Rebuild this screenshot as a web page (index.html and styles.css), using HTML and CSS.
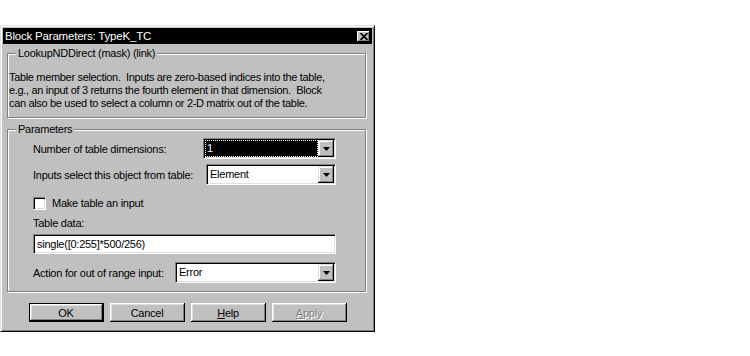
FILE: index.html
```html
<!DOCTYPE html>
<html lang="en">

<head>
    <meta charset="UTF-8">
    <title>Block Parameters: TypeK_TC</title>
    <link rel="stylesheet" href="styles.css">
</head>

<body>
    <div class="dialog">
        <!--标题栏-->
        <div class="titlebar">
            <span class="title">Block Parameters: TypeK_TC</span>
            <span class="close">
                <svg width="8" height="7" viewBox="0 0 8 7"><path d="M0.5 0 L7.5 7 M7.5 0 L0.5 7" stroke="#000" stroke-width="1.7"/></svg>
            </span>
        </div>

        <fieldset class="group group-mask">
            <legend>LookupNDDirect (mask) (link)</legend>
            <p class="desc">Table member selection.&nbsp; Inputs are zero-based indices into the table,<br>e.g., an input of 3 returns the fourth element in that dimension.&nbsp; Block<br>can also be used to select a column or 2-D matrix out of the table.</p>
        </fieldset>

        <fieldset class="group group-params">
            <legend>Parameters</legend>
            <div class="params">
                <div class="row row-dims">
                    <label>Number of table dimensions:</label>
                    <div class="combo combo-dims">
                        <span class="combo-text selected">1</span>
                        <span class="combo-btn"><svg width="7" height="4" viewBox="0 0 7 4"><polygon points="0,0 7,0 3.5,4" fill="#000"/></svg></span>
                    </div>
                </div>
                <div class="row row-select">
                    <label>Inputs select this object from table:</label>
                    <div class="combo combo-select">
                        <span class="combo-text">Element</span>
                        <span class="combo-btn"><svg width="7" height="4" viewBox="0 0 7 4"><polygon points="0,0 7,0 3.5,4" fill="#000"/></svg></span>
                    </div>
                </div>
                <div class="check-row">
                    <span class="checkbox"></span>
                    <span>Make table an input</span>
                </div>
                <div class="field-label">Table data:</div>
                <div class="edit">single([0:255]*500/256)</div>
                <div class="row row-action">
                    <label>Action for out of range input:</label>
                    <div class="combo combo-action">
                        <span class="combo-text">Error</span>
                        <span class="combo-btn"><svg width="7" height="4" viewBox="0 0 7 4"><polygon points="0,0 7,0 3.5,4" fill="#000"/></svg></span>
                    </div>
                </div>
            </div>
        </fieldset>

        <div class="buttons">
            <button class="btn default">OK</button>
            <button class="btn">Cancel</button>
            <button class="btn"><u>H</u>elp</button>
            <button class="btn disabled"><u>A</u>pply</button>
        </div>
    </div>
</body>

</html>
```

FILE: styles.css
```css
* {
    margin: 0;
    padding: 0;
    box-sizing: border-box;
}

body {
    background: #fff;
    font-family: "Liberation Sans", Arial, sans-serif;
    font-size: 11px;
    letter-spacing: -0.25px;
    color: #000;
}

.dialog {
    width: 375px;
    height: 307px;
    margin-top: 25px;
    padding: 2px;
    display: flex;
    flex-direction: column;
    background: #c0c0c0;
    border: 1px solid;
    border-color: #dfdfdf #000 #000 #dfdfdf;
    box-shadow: inset 1px 1px #fff, inset -1px -1px #808080;
}

/* 标题栏 */
.titlebar {
    height: 16px;
    display: flex;
    align-items: center;
    padding: 0 2px;
    background: #000;
    color: #fff;
}

.title {
    flex: 1;
    font-size: 11.5px;
    letter-spacing: -0.2px;
    line-height: 16px;
}

.close {
    width: 13px;
    height: 11px;
    display: flex;
    align-items: center;
    justify-content: center;
    background: #c0c0c0;
    box-shadow: inset -1px -1px #000, inset 1px 1px #fff, inset -2px -2px #808080;
}

/* 分组框 */
.group {
    margin: 3px 6px 0 4px;
    min-width: 0;
    border: 1px solid #808080;
    box-shadow: inset 1px 1px #fff, 1px 1px 0 #fff;
}

.group legend {
    margin-left: 8px;
    padding: 0 2px;
    line-height: 13px;
    background: #c0c0c0;
}

.group-params {
    margin-top: 5px;
}

.desc {
    padding: 11px 0 7px 1px;
    line-height: 13px;
    letter-spacing: -0.33px;
}

.params {
    padding: 1px 29px 8px 25px;
}

.row {
    display: flex;
    align-items: center;
    justify-content: space-between;
}

.row-dims {
    margin-top: 1px;
}

.row-select {
    margin-top: 5px;
}

.row-action {
    margin-top: 8px;
}

/* 下拉框 */
.combo {
    height: 21px;
    display: flex;
    background: #fff;
    border: 1px solid;
    border-color: #808080 #fff #fff #808080;
    box-shadow: inset 1px 1px #000, inset -1px -1px #dfdfdf;
    padding: 1px;
}

.combo-dims {
    width: 133px;
}

.combo-select {
    width: 130px;
}

.combo-action {
    width: 161px;
}

.combo-text {
    flex: 1;
    padding-left: 2px;
    line-height: 17px;
}

.combo-text.selected {
    background: #000;
    color: #fff;
    outline: 1px dotted #fff;
    outline-offset: -1px;
}

.combo-btn {
    width: 16px;
    display: flex;
    align-items: center;
    justify-content: center;
    background: #c0c0c0;
    box-shadow: inset -1px -1px #000, inset 1px 1px #dfdfdf, inset -2px -2px #808080, inset 2px 2px #fff;
}

/* 复选框 */
.check-row {
    display: flex;
    align-items: center;
    gap: 6px;
    margin-top: 12px;
    line-height: 13px;
}

.checkbox {
    width: 13px;
    height: 13px;
    background: #fff;
    border: 1px solid;
    border-color: #808080 #fff #fff #808080;
    box-shadow: inset 1px 1px #000, inset -1px -1px #dfdfdf;
}

.field-label {
    margin-top: 7px;
    line-height: 13px;
}

.edit {
    height: 20px;
    margin-top: 4px;
    padding-left: 3px;
    line-height: 18px;
    background: #fff;
    border: 1px solid;
    border-color: #808080 #fff #fff #808080;
    box-shadow: inset 1px 1px #000, inset -1px -1px #dfdfdf;
}

/* 按钮 */
.buttons {
    display: flex;
    justify-content: center;
    gap: 6px;
    margin-top: 11px;
}

.btn {
    width: 75px;
    height: 19px;
    font: inherit;
    letter-spacing: inherit;
    color: #000;
    background: #c0c0c0;
    border: none;
    box-shadow: inset -1px -1px #000, inset 1px 1px #fff, inset -2px -2px #808080, inset 2px 2px #dfdfdf;
}

.btn.default {
    border: 1px solid #000;
}

.btn.disabled {
    color: #808080;
    text-shadow: 1px 1px #fff;
}
```
